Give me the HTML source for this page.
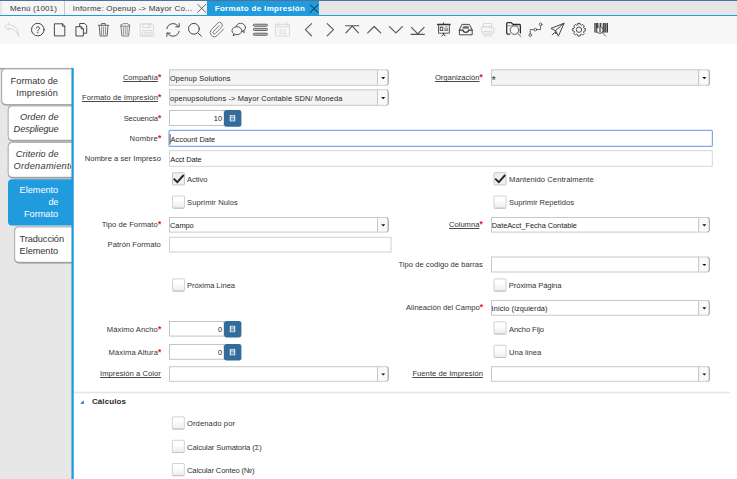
<!DOCTYPE html>
<html lang="es"><head><meta charset="utf-8"><title>Formato de Impresión</title>
<style>
html,body{margin:0;padding:0;}
body{width:737px;height:479px;overflow:hidden;background:#fff;position:relative;font-family:"Liberation Sans",sans-serif;color:#333;}
.t{position:absolute;white-space:nowrap;line-height:12px;}
.abs{position:absolute;}
#topband{left:0;top:0;width:737px;height:1px;background:#4f7397;}
#tabbar{left:0;top:1px;width:737px;height:14px;background:#e6e6e6;border-bottom:1px solid #1f9bde;}
.tab{position:absolute;top:0;height:14px;background:#f6f6f6;}
#toolbar{left:0;top:16px;width:737px;height:27px;background:#f7f7f7;border-bottom:1px solid #fafafa;}
#side{left:0;top:68px;width:72px;height:411px;background:#e7e7e7;}
svg{position:absolute;left:0;top:0;}
</style></head><body>
<div class="abs" id="topband"></div>
<div class="abs" id="tabbar">
 <div class="tab" style="left:2px;width:62px;border-right:1px solid #c8c8c8;"></div>
 <div class="tab" style="left:65px;width:141px;"></div>
 <div class="tab" style="left:207px;width:112px;background:#1f9bde;"></div>
</div>
<div class="abs" id="toolbar"></div>
<div class="abs" id="side"></div>
<svg width="737" height="479" viewBox="0 0 737 479">
<defs><linearGradient id="cbg" x1="0" y1="0" x2="0" y2="1"><stop offset="0.35" stop-color="#fff"/><stop offset="1" stop-color="#ececec"/></linearGradient></defs>
<rect x="0" y="67.9" width="72" height="1.6" fill="#a2a2a2"/>
<path d="M73 69.20 H6.10 Q1.30 69.20 1.30 74.00 V100.80 Q1.30 105.60 6.10 105.60 H73 Z" fill="#8f8f8f"/>
<path d="M73 68.30 H5.90 Q1.10 68.30 1.10 73.10 V100.00 Q1.10 104.80 5.90 104.80 H73 Z" fill="#b4b4b4"/>
<path d="M73 69.60 H6.00 Q2.20 69.60 2.20 73.40 V100.10 Q2.20 103.90 6.00 103.90 H73 Z" fill="#fff"/>
<path d="M73 106.00 H12.70 Q7.90 106.00 7.90 110.80 V136.60 Q7.90 141.40 12.70 141.40 H73 Z" fill="#8f8f8f"/>
<path d="M73 105.10 H12.50 Q7.70 105.10 7.70 109.90 V135.80 Q7.70 140.60 12.50 140.60 H73 Z" fill="#b4b4b4"/>
<path d="M73 106.40 H12.60 Q8.80 106.40 8.80 110.20 V135.90 Q8.80 139.70 12.60 139.70 H73 Z" fill="#fff"/>
<path d="M73 142.50 H12.70 Q7.90 142.50 7.90 147.30 V173.60 Q7.90 178.40 12.70 178.40 H73 Z" fill="#8f8f8f"/>
<path d="M73 141.60 H12.50 Q7.70 141.60 7.70 146.40 V172.80 Q7.70 177.60 12.50 177.60 H73 Z" fill="#b4b4b4"/>
<path d="M73 142.90 H12.60 Q8.80 142.90 8.80 146.70 V172.90 Q8.80 176.70 12.60 176.70 H73 Z" fill="#fff"/>
<path d="M73 179.20 H12.00 Q8.00 179.20 8.00 183.20 V221.40 Q8.00 225.40 12.00 225.40 H73 Z" fill="#1f9bde"/>
<path d="M73 227.10 H19.10 Q14.30 227.10 14.30 231.90 V258.60 Q14.30 263.40 19.10 263.40 H73 Z" fill="#8f8f8f"/>
<path d="M73 226.20 H18.90 Q14.10 226.20 14.10 231.00 V257.80 Q14.10 262.60 18.90 262.60 H73 Z" fill="#b4b4b4"/>
<path d="M73 227.50 H19.00 Q15.20 227.50 15.20 231.30 V257.90 Q15.20 261.70 19.00 261.70 H73 Z" fill="#fff"/>
<rect x="71.45" y="67.9" width="2.3" height="412" fill="#1f9bde"/>
<path d="M377.50 69.80 H386.20 Q388.20 69.80 388.20 71.80 V83.30 Q388.20 85.30 386.20 85.30 H377.50 Z" fill="#fafafa" stroke="#cdcdcd" stroke-width="1"/>
<path d="M386.50 69.90 Q388.20 70.00 388.20 71.80 V83.30 Q388.20 85.10 386.50 85.20" fill="none" stroke="#a6a6a6" stroke-width="1"/>
<rect x="169.50" y="69.80" width="208.00" height="15.50" fill="#f4f4f4" stroke="#c8c8c8" stroke-width="1" rx="0"/>
<path d="M381.20 76.95 h4.0 l-2.0 2.2 z" fill="#111"/>
<path d="M377.50 89.80 H386.20 Q388.20 89.80 388.20 91.80 V103.30 Q388.20 105.30 386.20 105.30 H377.50 Z" fill="#fafafa" stroke="#cdcdcd" stroke-width="1"/>
<path d="M386.50 89.90 Q388.20 90.00 388.20 91.80 V103.30 Q388.20 105.10 386.50 105.20" fill="none" stroke="#a6a6a6" stroke-width="1"/>
<rect x="169.50" y="89.80" width="208.00" height="15.50" fill="#f4f4f4" stroke="#c8c8c8" stroke-width="1" rx="0"/>
<path d="M381.20 96.95 h4.0 l-2.0 2.2 z" fill="#111"/>
<rect x="169.50" y="110.50" width="54.50" height="15.00" fill="#fff" stroke="#c4c4c4" stroke-width="1" rx="0"/>
<rect x="224.00" y="109.90" width="17.40" height="16.90" rx="2.4" fill="#336b9c"/>
<rect x="229.90" y="115.10" width="5.2" height="6.2" fill="rgba(255,255,255,0.28)"/><g fill="none" stroke="#eef3f8"><path d="M230.30 115.10 v6.2 M234.70 115.10 v6.2" stroke-width="1"/><path d="M230.30 115.40 h4.4 M230.30 117.30 h4.4 M230.30 121.00 h4.4" stroke-width="0.6"/></g>
<rect x="169.00" y="130.40" width="543.40" height="16.00" fill="#fff" stroke="#86aae8" stroke-width="1.2" rx="1"/>
<rect x="169.50" y="150.70" width="542.80" height="15.60" fill="#fff" stroke="#d6d6d6" stroke-width="1" rx="0"/>
<rect x="172.50" y="172.70" width="12" height="12.2" rx="0.6" fill="#eef1f4" stroke="#bfc8d1"/>
<path d="M173.70 178.60 L177.30 182.10 L183.70 175.00" stroke="#242424" stroke-width="1.9" fill="none"/>
<rect x="172.50" y="196.00" width="12" height="12.2" rx="0.6" fill="url(#cbg)" stroke="#d2d2d2"/>
<path d="M173.00 208.20 H184.00" stroke="#c2c2c2" stroke-width="1" fill="none"/>
<path d="M377.50 217.50 H386.20 Q388.20 217.50 388.20 219.50 V230.10 Q388.20 232.10 386.20 232.10 H377.50 Z" fill="#fafafa" stroke="#cdcdcd" stroke-width="1"/>
<path d="M386.50 217.60 Q388.20 217.70 388.20 219.50 V230.10 Q388.20 231.90 386.50 232.00" fill="none" stroke="#a6a6a6" stroke-width="1"/>
<rect x="169.50" y="217.50" width="208.00" height="14.60" fill="#fff" stroke="#c8c8c8" stroke-width="1" rx="0"/>
<path d="M381.20 224.20 h4.0 l-2.0 2.2 z" fill="#111"/>
<rect x="169.50" y="237.30" width="221.50" height="14.70" fill="#fff" stroke="#d0d0d0" stroke-width="1" rx="0"/>
<rect x="172.50" y="278.90" width="12" height="12.2" rx="0.6" fill="url(#cbg)" stroke="#d2d2d2"/>
<path d="M173.00 291.10 H184.00" stroke="#c2c2c2" stroke-width="1" fill="none"/>
<rect x="169.50" y="321.50" width="54.50" height="14.60" fill="#fff" stroke="#c4c4c4" stroke-width="1" rx="0"/>
<rect x="224.00" y="320.90" width="17.40" height="16.50" rx="2.4" fill="#336b9c"/>
<rect x="229.90" y="325.90" width="5.2" height="6.2" fill="rgba(255,255,255,0.28)"/><g fill="none" stroke="#eef3f8"><path d="M230.30 325.90 v6.2 M234.70 325.90 v6.2" stroke-width="1"/><path d="M230.30 326.20 h4.4 M230.30 328.10 h4.4 M230.30 331.80 h4.4" stroke-width="0.6"/></g>
<rect x="169.50" y="344.50" width="54.50" height="14.80" fill="#fff" stroke="#c4c4c4" stroke-width="1" rx="0"/>
<rect x="224.00" y="343.90" width="17.40" height="16.70" rx="2.4" fill="#336b9c"/>
<rect x="229.90" y="349.00" width="5.2" height="6.2" fill="rgba(255,255,255,0.28)"/><g fill="none" stroke="#eef3f8"><path d="M230.30 349.00 v6.2 M234.70 349.00 v6.2" stroke-width="1"/><path d="M230.30 349.30 h4.4 M230.30 351.20 h4.4 M230.30 354.90 h4.4" stroke-width="0.6"/></g>
<path d="M377.50 366.70 H386.20 Q388.20 366.70 388.20 368.70 V379.30 Q388.20 381.30 386.20 381.30 H377.50 Z" fill="#fafafa" stroke="#cdcdcd" stroke-width="1"/>
<path d="M386.50 366.80 Q388.20 366.90 388.20 368.70 V379.30 Q388.20 381.10 386.50 381.20" fill="none" stroke="#a6a6a6" stroke-width="1"/>
<rect x="169.50" y="366.70" width="208.00" height="14.60" fill="#fff" stroke="#c8c8c8" stroke-width="1" rx="0"/>
<path d="M381.20 373.40 h4.0 l-2.0 2.2 z" fill="#111"/>
<path d="M698.60 69.80 H707.30 Q709.30 69.80 709.30 71.80 V83.30 Q709.30 85.30 707.30 85.30 H698.60 Z" fill="#fafafa" stroke="#cdcdcd" stroke-width="1"/>
<path d="M707.60 69.90 Q709.30 70.00 709.30 71.80 V83.30 Q709.30 85.10 707.60 85.20" fill="none" stroke="#a6a6a6" stroke-width="1"/>
<rect x="491.50" y="69.80" width="207.10" height="15.50" fill="#f4f4f4" stroke="#c8c8c8" stroke-width="1" rx="0"/>
<path d="M702.30 76.95 h4.0 l-2.0 2.2 z" fill="#111"/>
<rect x="494.00" y="172.70" width="12" height="12.2" rx="0.6" fill="#eef1f4" stroke="#bfc8d1"/>
<path d="M495.20 178.60 L498.80 182.10 L505.20 175.00" stroke="#242424" stroke-width="1.9" fill="none"/>
<rect x="494.00" y="196.00" width="12" height="12.2" rx="0.6" fill="url(#cbg)" stroke="#d2d2d2"/>
<path d="M494.50 208.20 H505.50" stroke="#c2c2c2" stroke-width="1" fill="none"/>
<path d="M698.60 217.50 H707.30 Q709.30 217.50 709.30 219.50 V230.10 Q709.30 232.10 707.30 232.10 H698.60 Z" fill="#fafafa" stroke="#cdcdcd" stroke-width="1"/>
<path d="M707.60 217.60 Q709.30 217.70 709.30 219.50 V230.10 Q709.30 231.90 707.60 232.00" fill="none" stroke="#a6a6a6" stroke-width="1"/>
<rect x="491.50" y="217.50" width="207.10" height="14.60" fill="#fff" stroke="#c8c8c8" stroke-width="1" rx="0"/>
<path d="M702.30 224.20 h4.0 l-2.0 2.2 z" fill="#111"/>
<path d="M698.60 257.00 H707.30 Q709.30 257.00 709.30 259.00 V270.00 Q709.30 272.00 707.30 272.00 H698.60 Z" fill="#fafafa" stroke="#cdcdcd" stroke-width="1"/>
<path d="M707.60 257.10 Q709.30 257.20 709.30 259.00 V270.00 Q709.30 271.80 707.60 271.90" fill="none" stroke="#a6a6a6" stroke-width="1"/>
<rect x="491.50" y="257.00" width="207.10" height="15.00" fill="#fff" stroke="#c8c8c8" stroke-width="1" rx="0"/>
<path d="M702.30 263.90 h4.0 l-2.0 2.2 z" fill="#111"/>
<rect x="494.00" y="278.90" width="12" height="12.2" rx="0.6" fill="url(#cbg)" stroke="#d2d2d2"/>
<path d="M494.50 291.10 H505.50" stroke="#c2c2c2" stroke-width="1" fill="none"/>
<path d="M698.60 300.50 H707.30 Q709.30 300.50 709.30 302.50 V313.20 Q709.30 315.20 707.30 315.20 H698.60 Z" fill="#fafafa" stroke="#cdcdcd" stroke-width="1"/>
<path d="M707.60 300.60 Q709.30 300.70 709.30 302.50 V313.20 Q709.30 315.00 707.60 315.10" fill="none" stroke="#a6a6a6" stroke-width="1"/>
<rect x="491.50" y="300.50" width="207.10" height="14.70" fill="#fff" stroke="#c8c8c8" stroke-width="1" rx="0"/>
<path d="M702.30 307.25 h4.0 l-2.0 2.2 z" fill="#111"/>
<rect x="494.00" y="321.80" width="12" height="12.2" rx="0.6" fill="url(#cbg)" stroke="#d2d2d2"/>
<path d="M494.50 334.00 H505.50" stroke="#c2c2c2" stroke-width="1" fill="none"/>
<rect x="494.00" y="345.30" width="12" height="12.2" rx="0.6" fill="url(#cbg)" stroke="#d2d2d2"/>
<path d="M494.50 357.50 H505.50" stroke="#c2c2c2" stroke-width="1" fill="none"/>
<path d="M698.60 366.70 H707.30 Q709.30 366.70 709.30 368.70 V379.30 Q709.30 381.30 707.30 381.30 H698.60 Z" fill="#fafafa" stroke="#cdcdcd" stroke-width="1"/>
<path d="M707.60 366.80 Q709.30 366.90 709.30 368.70 V379.30 Q709.30 381.10 707.60 381.20" fill="none" stroke="#a6a6a6" stroke-width="1"/>
<rect x="491.50" y="366.70" width="207.10" height="14.60" fill="#fff" stroke="#c8c8c8" stroke-width="1" rx="0"/>
<path d="M702.30 373.40 h4.0 l-2.0 2.2 z" fill="#111"/>
<rect x="74" y="391.7" width="656" height="1.6" fill="#e5e5e5"/>
<path d="M83.8 400.4 V403.8 H80.2 Z" fill="#1b62c4"/>
<rect x="172.30" y="416.90" width="12" height="12.2" rx="0.6" fill="url(#cbg)" stroke="#d2d2d2"/>
<path d="M172.80 429.10 H183.80" stroke="#c2c2c2" stroke-width="1" fill="none"/>
<rect x="172.30" y="440.30" width="12" height="12.2" rx="0.6" fill="url(#cbg)" stroke="#d2d2d2"/>
<path d="M172.80 452.50 H183.80" stroke="#c2c2c2" stroke-width="1" fill="none"/>
<rect x="172.30" y="463.50" width="12" height="12.2" rx="0.6" fill="url(#cbg)" stroke="#d2d2d2"/>
<path d="M172.80 475.70 H183.80" stroke="#c2c2c2" stroke-width="1" fill="none"/>
<rect x="169.7" y="134" width="0.8" height="10.4" fill="#333"/>
<g fill="none" stroke="#d6d6d6" stroke-width="1.0" stroke-linecap="round" stroke-linejoin="round" ><path d="M4.9 26.4 L8.5 23 V24.8 C14.2 24.8 18.4 28.6 18.6 36.5 C17 31.4 13.6 28.4 8.5 28.3 V29.9 Z"/></g>
<g fill="none" stroke="#444" stroke-width="1.0" stroke-linecap="round" stroke-linejoin="round" ><circle cx="37.8" cy="29.6" r="6.3"/><path d="M36.2 28.2 C36.2 26.2 39.5 26.2 39.5 28.2 C39.5 29.5 37.8 29.5 37.8 31 M37.8 32.4 v0.5"/></g>
<g fill="none" stroke="#3a3a3a" stroke-width="0.9" stroke-linecap="round" stroke-linejoin="round" ><path d="M54.8 23.8 H62.4 L64.8 26.2 V35.9 H54.8 Z M62.4 23.8 V26.2 H64.8"/></g>
<g fill="none" stroke="#333" stroke-width="0.9" stroke-linecap="round" stroke-linejoin="round" ><path d="M79.7 26.2 V23.5 H84.6 L86.7 25.6 V33.2 H84"/><path d="M76.3 26.7 H81.2 L83.4 28.9 V36 H76.3 Z M81.2 26.7 V28.9 H83.4"/></g>
<g fill="none" stroke="#5e5e5e" stroke-width="0.95" stroke-linecap="round" stroke-linejoin="round" ><path d="M98.3 25.3 H108.7 M101.6 25.1 V23.5 H105.2 V25.1 M99.2 25.5 L100.1 36 H107.1 L108 25.5"/><path d="M101.6 27 V34.5 M103.6 27 V34.5 M105.6 27 V34.5" stroke-width="0.7"/></g>
<g fill="none" stroke="#737373" stroke-width="0.9" stroke-linecap="round" stroke-linejoin="round" ><path d="M120.9 25.8 L121.9 36 H128.6 L129.6 25.8 M120.6 25.8 Q120.7 23.8 122.6 24.3 Q123.8 22.8 125.3 23.8 Q127.3 22.8 128.2 24.3 Q129.8 24.1 129.9 25.8 Z"/><path d="M123.4 27.5 V34.5 M125.3 27.5 V34.5 M127.2 27.5 V34.5" stroke-width="0.7"/></g>
<g fill="none" stroke="#d6d6d6" stroke-width="0.9" stroke-linecap="round" stroke-linejoin="round" ><path d="M140.6 23.9 H151.6 L153.6 25.9 V36 H140.6 Z"/><rect x="143.4" y="23.9" width="7.3" height="3.6"/><rect x="142.9" y="30.5" width="9" height="5.5"/><path d="M148.6 24.8 V26.6 M144.6 32.4 H150 M144.6 34.2 H150"/></g>
<g fill="none" stroke="#484848" stroke-width="1.0" stroke-linecap="round" stroke-linejoin="round" ><path d="M166.9 28.6 A6.25 6.25 0 0 1 178.5 26.9 M179.2 23.5 V26.8 H175.9 M179.1 31.2 A6.25 6.25 0 0 1 167.5 32.9 M166.9 36.3 V33.1 H170.2"/></g>
<g fill="none" stroke="#484848" stroke-width="1.0" stroke-linecap="round" stroke-linejoin="round" ><circle cx="193.9" cy="28.8" r="5.4"/><path d="M197.9 32.9 L201.5 36.3"/></g>
<g fill="none" stroke="#6a6a6a" stroke-width="1.3" stroke-linecap="round" stroke-linejoin="round" transform="translate(208.86 21.32) scale(0.68 0.705)"><path d="M21.44 11.05l-9.19 9.19a6 6 0 0 1-8.49-8.49l9.19-9.19a4 4 0 0 1 5.66 5.66l-9.2 9.19a2 2 0 0 1-2.83-2.83l8.49-8.48"/></g>
<g fill="none" stroke="#555" stroke-width="1.0" stroke-linecap="round" stroke-linejoin="round" ><ellipse cx="240.7" cy="27.5" rx="4.8" ry="4.2"/><path d="M242.6 31.4 L244.1 32.7 L243.9 30.4"/></g>
<ellipse cx="236.9" cy="30.7" rx="4.9" ry="4.0" fill="#f7f7f7" stroke="#555" stroke-width="1"/>
<path d="M233.7 33.6 L233.1 35.7 L235.6 34.6" fill="#f7f7f7" stroke="#555" stroke-width="1" stroke-linejoin="round"/>
<rect x="253.3" y="24.2" width="14.2" height="2.1" rx="1.05" fill="#bcbcbc" stroke="#4c4c4c" stroke-width="0.8"/>
<rect x="253.3" y="28.4" width="14.2" height="2.1" rx="1.05" fill="#bcbcbc" stroke="#4c4c4c" stroke-width="0.8"/>
<rect x="253.3" y="33.2" width="14.2" height="2.1" rx="1.05" fill="#bcbcbc" stroke="#4c4c4c" stroke-width="0.8"/>
<g fill="none" stroke="#d6d6d6" stroke-width="0.9" stroke-linecap="round" stroke-linejoin="round" ><rect x="275.5" y="24.3" width="14" height="11.7" rx="0.6"/><path d="M278.3 22.7 V25.7 M286.7 22.7 V25.7 M275.5 26.9 H289.5"/></g>
<text x="282.5" y="34.3" font-family="Liberation Sans, sans-serif" font-size="7.2" fill="#d4d4d4" text-anchor="middle">31</text>
<g fill="none" stroke="#5a5a5a" stroke-width="1.15" stroke-linecap="round" stroke-linejoin="round" stroke-linecap="butt"><path d="M311.6 23.7 L305.4 29.7 L311.6 35.8"/><path d="M327.2 23.7 L333.5 29.7 L327.2 35.8"/></g>
<g fill="none" stroke="#555" stroke-width="1.15" stroke-linecap="round" stroke-linejoin="round" ><path d="M345.6 25.7 H358.8 M345.9 32.8 L352.2 26.2 L358.5 32.8"/><path d="M367.7 32.8 L374.2 26.5 L380.7 32.8"/><path d="M389.4 26.6 L395.9 32.8 L402.4 26.6"/><path d="M411.1 34.3 H424.4 M411.4 27.3 L417.8 33.8 L424.1 27.3"/></g>
<g fill="none" stroke="#333" stroke-width="1.0" stroke-linecap="round" stroke-linejoin="round" ><path d="M437.6 24.5 H450" stroke-width="1.4"/><path d="M438.5 25 V33.2 H449.4 V25" stroke="#5a5a5a"/><path d="M443.6 23 V24 M443.6 33.3 V34.3 M442 35.9 L443.6 34.2 L445.2 35.9"/><rect x="440.2" y="27.1" width="2.6" height="3.3" stroke-width="0.85" stroke-linejoin="miter"/><path d="M445.6 26.7 H447 M444.7 28.3 H447.8" stroke-width="0.7" stroke="#666"/><path d="M444.7 30.1 H447.8" stroke-width="1"/></g>
<g fill="none" stroke="#3a3a3a" stroke-width="1.0" stroke-linecap="round" stroke-linejoin="round" ><path d="M462.3 24.4 H469.4 L472.2 29.9 V34.8 H459.4 V29.9 Z" stroke-width="0.9"/><path d="M459.4 30.1 H463 Q463.3 32.3 465.8 32.3 Q468.3 32.3 468.6 30.1 H472.2" stroke-width="1.25"/><path d="M463.6 26.3 H468.2 L469 28.4 H462.8 Z" fill="#6c6c6c" stroke="#777" stroke-width="0.5"/></g>
<g fill="none" stroke="#d6d6d6" stroke-width="0.9" stroke-linecap="round" stroke-linejoin="round" ><rect x="483.8" y="23.5" width="7.6" height="3.3"/><rect x="481.6" y="26.8" width="12.1" height="6.5" rx="1"/></g>
<rect x="483.8" y="31.4" width="7.6" height="4.6" fill="#f7f7f7" stroke="#d6d6d6" stroke-width="0.9"/>
<g fill="none" stroke="#d6d6d6" stroke-width="0.8" stroke-linecap="round" stroke-linejoin="round" ><path d="M485.4 33 H489.8 M485.4 34.4 H489.8 M490.6 28.6 h1.4"/></g>
<g fill="none" stroke="#2c2c2c" stroke-width="1.05" stroke-linecap="round" stroke-linejoin="round" ><path d="M509.8 34 H507.6 Q506.7 34 506.7 33.1 V23.5 Q506.7 22.6 507.6 22.6 H511.2 L512.9 24.3 H519.5 Q520.4 24.3 520.4 25.2 V33" stroke-width="1.25"/><path d="M507.3 25.8 H520" stroke="#777" stroke-width="0.8"/><circle cx="514.5" cy="30.1" r="4.3" stroke="#5c5c5c" stroke-width="1" fill="#f7f7f7"/><path d="M517.7 33.4 L520.8 36.4" stroke="#555" stroke-width="0.95"/></g>
<g fill="none" stroke="#505050" stroke-width="0.85" stroke-linecap="round" stroke-linejoin="round" ><circle cx="540.6" cy="24.4" r="1.35"/><circle cx="535.4" cy="29.6" r="1.35"/><circle cx="530.2" cy="35.1" r="1.35"/><path d="M540.6 25.9 V29.6 H536.9 M533.9 29.6 H530.2 V33.6"/></g>
<g fill="none" stroke="#444" stroke-width="1.0" stroke-linecap="round" stroke-linejoin="round" ><path d="M563.8 23.3 L550.9 28.4 L555.5 30.7 L558.2 35.8 Z M563.8 23.3 L555.5 30.7 M555.5 30.7 L555.2 33.6 L556.8 33.2 M552.2 34.9 L554.4 32.7"/></g>
<g fill="none" stroke="#484848" stroke-width="0.95" stroke-linecap="round" stroke-linejoin="round" ><path d="M577.84 23.35 L580.16 23.35 L580.33 24.67 L581.61 25.20 L582.67 24.39 L584.31 26.03 L583.50 27.09 L584.03 28.37 L585.35 28.54 L585.35 30.86 L584.03 31.03 L583.50 32.31 L584.31 33.37 L582.67 35.01 L581.61 34.20 L580.33 34.73 L580.16 36.05 L577.84 36.05 L577.67 34.73 L576.39 34.20 L575.33 35.01 L573.69 33.37 L574.50 32.31 L573.97 31.03 L572.65 30.86 L572.65 28.54 L573.97 28.37 L574.50 27.09 L573.69 26.03 L575.33 24.39 L576.39 25.20 L577.67 24.67 Z"/><circle cx="579" cy="29.7" r="2.7"/></g>
<rect x="594" y="23" width="14" height="9.6" fill="#fdfdfd"/>
<g fill="#3a3a3a"><rect x="594.1" y="23" width="0.7" height="9.6"/><rect x="595.4" y="23" width="2.5" height="9.6"/><rect x="598.6" y="23" width="0.7" height="9.6"/><rect x="599.9" y="23" width="1.1" height="9.6"/><rect x="601.7" y="23" width="0.6" height="9.6"/><rect x="603.1" y="23" width="1.6" height="9.6"/><rect x="605.1" y="23" width="1.1" height="9.6"/><rect x="606.6" y="23" width="1.4" height="9.6"/></g>
<circle cx="599.8" cy="30.1" r="3.3" fill="#f0f0f0" stroke="#4a4a4a" stroke-width="0.9"/>
<rect x="599.4" y="27.8" width="1.2" height="4.4" fill="#444"/>
<g fill="none" stroke="#555" stroke-width="0.9" stroke-linecap="round" stroke-linejoin="round" ><path d="M602.2 32.6 L605.6 36"/></g>
<g fill="none" stroke="#555" stroke-width="0.9" stroke-linecap="round" stroke-linejoin="round" ><path d="M197.8 4.5 L205.6 12.2 M205.6 4.5 L197.8 12.2"/></g>
<g fill="none" stroke="#101418" stroke-width="0.85" stroke-linecap="round" stroke-linejoin="round" ><path d="M310.4 4.8 L317.9 12.4 M317.9 4.8 L310.4 12.4"/></g>
</svg>
<span class="t" style="left:10.00px;top:2.50px;font-size:8px;letter-spacing:0.149px;color:#383838;">Menú (1001)</span>
<span class="t" style="left:72.80px;top:2.50px;font-size:8px;letter-spacing:0.215px;color:#383838;">Informe: Openup -&gt; Mayor Co...</span>
<span class="t" style="left:214.70px;top:2.50px;font-size:8px;letter-spacing:0.329px;font-weight:bold;color:#fff;">Formato de Impresión</span>
<span class="t" style="left:10.60px;top:75.00px;font-size:9.2px;letter-spacing:0.036px;">Formato de</span>
<span class="t" style="left:16.30px;top:87.00px;font-size:9.2px;letter-spacing:0.145px;">Impresión</span>
<span class="t" style="left:20.00px;top:111.00px;font-size:9.2px;letter-spacing:0.043px;font-style:italic;">Orden de</span>
<span class="t" style="left:13.60px;top:123.00px;font-size:9.2px;letter-spacing:-0.093px;font-style:italic;">Despliegue</span>
<span class="t" style="left:15.80px;top:148.00px;font-size:9.2px;letter-spacing:0.042px;font-style:italic;">Criterio de</span>
<span class="t" style="left:13.60px;top:160.00px;font-size:9.2px;letter-spacing:0.275px;font-style:italic;width:57.9px;overflow:hidden;">Ordenamiento</span>
<span class="t" style="left:19.60px;top:184.00px;font-size:9.2px;letter-spacing:-0.033px;color:#fff;">Elemento</span>
<span class="t" style="left:48.40px;top:196.00px;font-size:9.2px;letter-spacing:-0.217px;color:#fff;">de</span>
<span class="t" style="left:23.90px;top:208.00px;font-size:9.2px;letter-spacing:0.007px;color:#fff;">Formato</span>
<span class="t" style="left:19.60px;top:233.00px;font-size:9.2px;letter-spacing:-0.077px;">Traducción</span>
<span class="t" style="left:19.60px;top:245.00px;font-size:9.2px;letter-spacing:-0.058px;">Elemento</span>
<span class="t" style="left:122.90px;top:71.50px;font-size:7.6px;text-decoration:underline;text-decoration-thickness:0.7px;text-underline-offset:1.2px;text-decoration-color:#4a4a4a;text-decoration-skip-ink:none;">Compañía</span>
<span class="t" style="left:158.10px;top:71.00px;font-size:8.5px;font-weight:bold;color:#f2101c;">*</span>
<span class="t" style="left:82.00px;top:91.50px;font-size:7.6px;letter-spacing:0.083px;text-decoration:underline;text-decoration-thickness:0.7px;text-underline-offset:1.2px;text-decoration-color:#4a4a4a;text-decoration-skip-ink:none;">Formato de Impresión</span>
<span class="t" style="left:158.10px;top:91.00px;font-size:8.5px;font-weight:bold;color:#f2101c;">*</span>
<span class="t" style="left:123.70px;top:112.50px;font-size:7.6px;letter-spacing:-0.132px;">Secuencia</span>
<span class="t" style="left:158.10px;top:112.00px;font-size:8.5px;font-weight:bold;color:#f2101c;">*</span>
<span class="t" style="left:129.60px;top:132.50px;font-size:7.6px;letter-spacing:0.228px;">Nombre</span>
<span class="t" style="left:158.10px;top:132.00px;font-size:8.5px;font-weight:bold;color:#f2101c;">*</span>
<span class="t" style="left:84.70px;top:152.50px;font-size:7.6px;letter-spacing:0.035px;">Nombre a ser Impreso</span>
<span class="t" style="left:101.70px;top:218.50px;font-size:7.6px;letter-spacing:0.042px;">Tipo de Formato</span>
<span class="t" style="left:157.90px;top:218.00px;font-size:8.5px;font-weight:bold;color:#f2101c;">*</span>
<span class="t" style="left:107.60px;top:238.50px;font-size:7.6px;letter-spacing:0.036px;">Patrón Formato</span>
<span class="t" style="left:106.80px;top:323.50px;font-size:7.6px;letter-spacing:0.113px;">Máximo Ancho</span>
<span class="t" style="left:158.10px;top:323.00px;font-size:8.5px;font-weight:bold;color:#f2101c;">*</span>
<span class="t" style="left:108.50px;top:346.50px;font-size:7.6px;letter-spacing:0.104px;">Máxima Altura</span>
<span class="t" style="left:158.10px;top:346.00px;font-size:8.5px;font-weight:bold;color:#f2101c;">*</span>
<span class="t" style="left:100.00px;top:367.50px;font-size:7.6px;letter-spacing:0.060px;text-decoration:underline;text-decoration-thickness:0.7px;text-underline-offset:1.2px;text-decoration-color:#4a4a4a;text-decoration-skip-ink:none;">Impresión a Color</span>
<span class="t" style="left:434.90px;top:71.50px;font-size:7.6px;letter-spacing:-0.015px;text-decoration:underline;text-decoration-thickness:0.7px;text-underline-offset:1.2px;text-decoration-color:#4a4a4a;text-decoration-skip-ink:none;">Organización</span>
<span class="t" style="left:479.60px;top:71.00px;font-size:8.5px;font-weight:bold;color:#f2101c;">*</span>
<span class="t" style="left:449.00px;top:218.50px;font-size:7.6px;text-decoration:underline;text-decoration-thickness:0.7px;text-underline-offset:1.2px;text-decoration-color:#4a4a4a;text-decoration-skip-ink:none;">Columna</span>
<span class="t" style="left:479.50px;top:218.00px;font-size:8.5px;font-weight:bold;color:#f2101c;">*</span>
<span class="t" style="left:398.40px;top:258.50px;font-size:7.6px;letter-spacing:0.034px;">Tipo de codigo de barras</span>
<span class="t" style="left:406.00px;top:301.50px;font-size:7.6px;letter-spacing:-0.012px;">Alineación del Campo</span>
<span class="t" style="left:479.80px;top:301.00px;font-size:8.5px;font-weight:bold;color:#f2101c;">*</span>
<span class="t" style="left:412.40px;top:367.50px;font-size:7.6px;letter-spacing:0.047px;text-decoration:underline;text-decoration-thickness:0.7px;text-underline-offset:1.2px;text-decoration-color:#4a4a4a;text-decoration-skip-ink:none;">Fuente de Impresión</span>
<span class="t" style="left:170.00px;top:72.50px;font-size:7.4px;letter-spacing:0.117px;color:#222;">Openup Solutions</span>
<span class="t" style="left:170.00px;top:92.50px;font-size:7.4px;letter-spacing:0.161px;color:#222;">openupsolutions -&gt; Mayor Contable SDN/ Moneda</span>
<span class="t" style="left:213.77px;top:112.50px;font-size:7.4px;color:#222;">10</span>
<span class="t" style="left:170.60px;top:133.50px;font-size:7.4px;letter-spacing:0.015px;color:#222;">Account Date</span>
<span class="t" style="left:170.30px;top:153.50px;font-size:7.4px;letter-spacing:-0.098px;color:#222;">Acct Date</span>
<span class="t" style="left:491.60px;top:74.00px;font-size:11px;color:#3a3a3a;">*</span>
<span class="t" style="left:170.00px;top:219.50px;font-size:7.4px;letter-spacing:-0.031px;color:#222;">Campo</span>
<span class="t" style="left:491.80px;top:219.50px;font-size:7.4px;letter-spacing:-0.051px;color:#222;">DateAcct_Fecha Contable</span>
<span class="t" style="left:491.60px;top:302.50px;font-size:7.4px;letter-spacing:0.101px;color:#222;">Inicio (izquierda)</span>
<span class="t" style="left:217.88px;top:323.50px;font-size:7.4px;color:#222;">0</span>
<span class="t" style="left:217.88px;top:346.50px;font-size:7.4px;color:#222;">0</span>
<span class="t" style="left:187.00px;top:173.50px;font-size:7.6px;letter-spacing:-0.066px;">Activo</span>
<span class="t" style="left:187.00px;top:196.50px;font-size:7.6px;letter-spacing:0.083px;">Suprimir Nulos</span>
<span class="t" style="left:509.00px;top:173.50px;font-size:7.6px;letter-spacing:0.072px;">Mantenido Centralmente</span>
<span class="t" style="left:509.00px;top:196.50px;font-size:7.6px;letter-spacing:0.021px;">Suprimir Repetidos</span>
<span class="t" style="left:187.00px;top:279.50px;font-size:7.6px;letter-spacing:-0.077px;">Próxima Línea</span>
<span class="t" style="left:508.80px;top:279.50px;font-size:7.6px;letter-spacing:-0.075px;">Próxima Página</span>
<span class="t" style="left:509.00px;top:323.50px;font-size:7.6px;letter-spacing:-0.091px;">Ancho Fijo</span>
<span class="t" style="left:509.00px;top:346.50px;font-size:7.6px;letter-spacing:-0.037px;">Una línea</span>
<span class="t" style="left:186.90px;top:417.50px;font-size:7.6px;letter-spacing:0.117px;">Ordenado por</span>
<span class="t" style="left:187.00px;top:441.50px;font-size:7.6px;letter-spacing:-0.077px;">Calcular Sumatoria (Σ)</span>
<span class="t" style="left:187.00px;top:464.50px;font-size:7.6px;letter-spacing:-0.122px;">Calcular Conteo (№)</span>
<span class="t" style="left:92.00px;top:395.50px;font-size:8px;letter-spacing:0.070px;font-weight:bold;color:#2a2a2a;">Cálculos</span>
</body></html>
